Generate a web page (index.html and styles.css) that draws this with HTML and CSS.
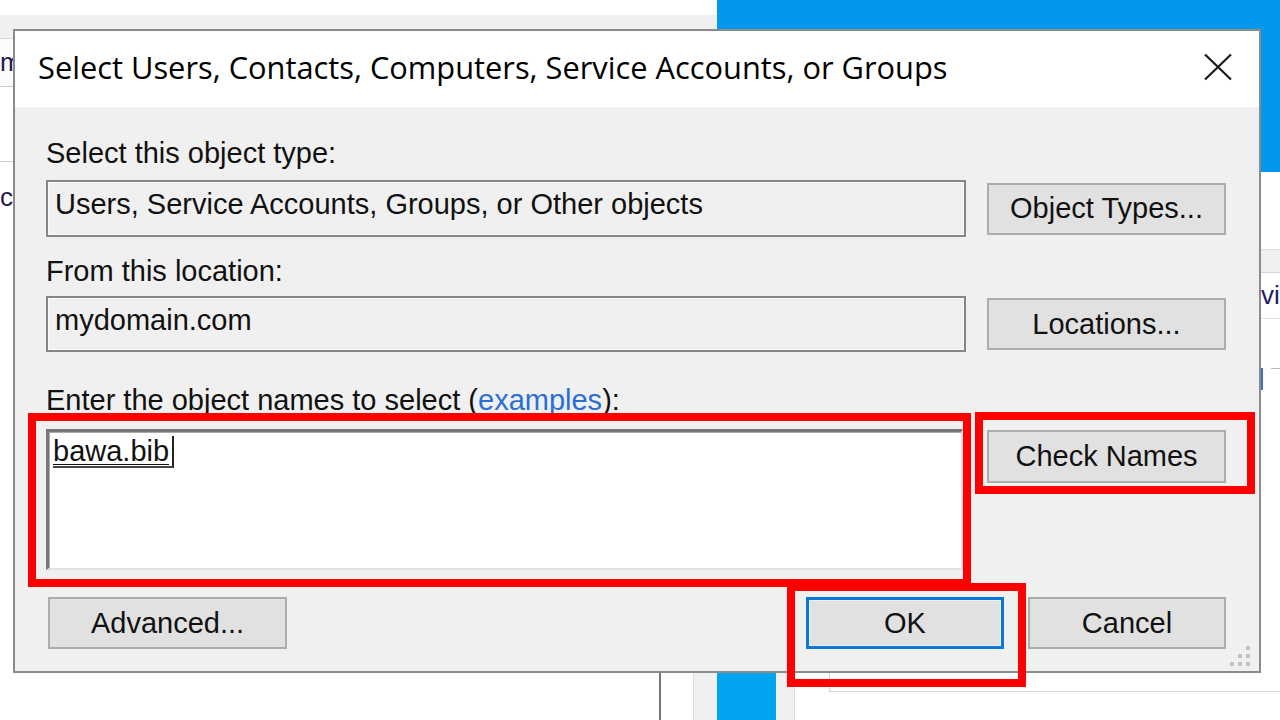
FILE: index.html
```html
<!DOCTYPE html>
<html lang="en">
<head>
<meta charset="utf-8">
<title>Select Users, Contacts, Computers, Service Accounts, or Groups</title>
<link rel="stylesheet" href="styles.css">
</head>
<body>
<div class="desktop">
  <div class="bg-left">
    <div class="bg-left-head"></div>
    <div class="bg-left-row bg-left-row1"><span class="bg-cut">m</span></div>
    <div class="bg-left-row bg-left-row2"></div>
    <div class="bg-left-row3"><span class="bg-cut2">c</span></div>
  </div>
  <div class="bg-blue"></div>
  <div class="bg-right">
    <div class="bg-right-head"></div>
    <div class="bg-right-row">vi</div>
    <div class="bg-right-tick"><span class="tick-blue"></span><span class="tick-line"></span></div>
  </div>
  <div class="bg-vline"></div>
  <div class="bg-strip"><div class="bg-strip-blue"></div></div>
  <div class="bg-frame"></div>

  <div class="dialog">
    <div class="titlebar">
      <span class="title">Select Users, Contacts, Computers, Service Accounts, or Groups</span>
      <svg class="close" width="30" height="28" viewBox="0 0 30 28"><path d="M2 1.5 L28 26.5 M28 1.5 L2 26.5" stroke="#1a1a1a" stroke-width="2.2" fill="none"/></svg>
    </div>
    <div class="content">
      <div class="label">Select this object type:</div>
      <div class="row row-field">
        <div class="field">Users, Service Accounts, Groups, or Other objects</div>
        <div class="btn">Object Types...</div>
      </div>
      <div class="label label-2">From this location:</div>
      <div class="row row-field row-field-2">
        <div class="field field-2">mydomain.com</div>
        <div class="btn">Locations...</div>
      </div>
      <div class="label label-3"><u>E</u>nter the object names to select (<a class="link" href="#">examples</a>):</div>
      <div class="row row-names">
        <div class="names"><span class="name">bawa.bib</span></div>
        <div class="btn btn-check">Check Names</div>
      </div>
      <div class="row row-bottom">
        <div class="btn btn-adv">Advanced...</div>
        <div class="btn btn-ok">OK</div>
        <div class="btn btn-cancel">Cancel</div>
      </div>
    </div>
    <svg class="grip" width="20" height="20" viewBox="0 0 20 20">
      <rect x="16" y="0" width="4" height="4" fill="#c2c2c2"/>
      <rect x="8" y="8" width="4" height="4" fill="#c2c2c2"/>
      <rect x="16" y="8" width="4" height="4" fill="#c2c2c2"/>
      <rect x="0" y="16" width="4" height="4" fill="#c2c2c2"/>
      <rect x="8" y="16" width="4" height="4" fill="#c2c2c2"/>
      <rect x="16" y="16" width="4" height="4" fill="#c2c2c2"/>
    </svg>
  </div>

  <div class="mark mark-names"></div>
  <div class="mark mark-check"></div>
  <div class="mark mark-ok"></div>
</div>
</body>
</html>
```

FILE: styles.css
```css
html, body {
  margin: 0;
  padding: 0;
}
body {
  background: #fff;
  font-family: "Liberation Sans", Arial, sans-serif;
  overflow: hidden;
}
.desktop {
  position: relative;
  width: 1280px;
  height: 720px;
  overflow: hidden;
  background: #fff;
}

/* background windows */
.bg-left {
  position: absolute;
  left: 0;
  top: 15px;
  width: 717px;
  height: 705px;
  background: #fff;
}
.bg-left-head {
  height: 23px;
  background: #f0f0f0;
  border-bottom: 1px solid #d8d8d8;
}
.bg-left-row {
  border-bottom: 1px solid #cdcdcd;
  font-size: 26px;
  color: #1c1c50;
  overflow: hidden;
  white-space: nowrap;
}
.bg-left-row1 {
  height: 47px;
  line-height: 47px;
  background: #fbfbfb;
}
.bg-left-row2 {
  height: 74px;
}
.bg-left-row3 {
  height: 60px;
  padding-top: 20px;
  font-size: 26px;
  color: #1c1c50;
  overflow: hidden;
}
.bg-cut {
  display: inline-block;
  margin-left: 0;
}
.bg-cut2 {
  display: inline-block;
  margin-left: 0;
}
.bg-blue {
  position: absolute;
  left: 717px;
  top: 0;
  width: 563px;
  height: 172px;
  background: #0398ee;
}
.bg-right {
  position: absolute;
  left: 1240px;
  top: 249px;
  width: 40px;
  height: 200px;
}
.bg-right-head {
  height: 22px;
  background: #f0f0f0;
  border-top: 1px solid #e2e2e2;
  border-bottom: 1px solid #d6d6d6;
}
.bg-right-row {
  height: 45px;
  line-height: 45px;
  padding-left: 21px;
  font-size: 26px;
  color: #1d1d6a;
  border-bottom: 1px solid #e3e3e3;
  white-space: nowrap;
}
.bg-right-tick {
  display: flex;
  align-items: flex-start;
  margin-top: 49px;
  padding-left: 21px;
}
.tick-blue {
  width: 2px;
  height: 22px;
  background: #3a6fc4;
}
.tick-line {
  width: 12px;
  height: 1px;
  margin-left: 8px;
  background: #bdbdbd;
}
.bg-vline {
  position: absolute;
  left: 659px;
  top: 673px;
  width: 2px;
  height: 47px;
  background: #767676;
}
.bg-strip {
  position: absolute;
  left: 693px;
  top: 673px;
  width: 100px;
  height: 47px;
  background: #f0f0f0;
  border-left: 1px solid #dcdcdc;
  border-right: 1px solid #dcdcdc;
}
.bg-strip-blue {
  margin-left: 23px;
  width: 59px;
  height: 100%;
  background: #00a4ef;
}
.bg-frame {
  position: absolute;
  left: 829px;
  top: 673px;
  width: 451px;
  height: 18px;
  border-left: 1px solid #d4d4d4;
  border-bottom: 1px solid #d4d4d4;
}

/* dialog */
.dialog {
  position: absolute;
  left: 13px;
  top: 29px;
  width: 1248px;
  height: 644px;
  box-sizing: border-box;
  border: 2px solid #8b8b8b;
  background: #f0f0f0;
  display: flex;
  flex-direction: column;
}
.titlebar {
  height: 76px;
  flex: 0 0 76px;
  background: #fff;
  display: flex;
  align-items: center;
  justify-content: space-between;
  padding: 0 26px 0 23px;
}
.title {
  font-family: "Open Sans", "Noto Sans", sans-serif;
  font-size: 30.8px;
  line-height: 1;
  margin-bottom: 3px;
  color: #000;
  white-space: nowrap;
}
.close {
  display: block;
  margin-top: -4px;
}
.content {
  padding: 30px 33px 0 31px;
  display: flex;
  flex-direction: column;
}
.label {
  height: 32px;
  line-height: 32px;
  font-size: 29px;
  color: #111;
  white-space: nowrap;
}
.label-2 {
  margin-top: 18px;
}
.label-3 {
  margin-top: 32px;
}
.label u {
  text-decoration-thickness: 2px;
  text-underline-offset: 3px;
}
.link {
  color: #2a6fd6;
  text-decoration: underline;
  text-decoration-thickness: 1px;
  text-underline-offset: 3px;
}
.row {
  display: flex;
  gap: 21px;
  align-items: center;
}
.row-field {
  margin-top: 11px;
}
.row-field-2 {
  margin-top: 9px;
}
.field {
  flex: 0 0 920px;
  height: 57px;
  box-sizing: border-box;
  border: 2px solid #868686;
  box-shadow: inset 0 0 0 1px #fbfbfb;
  background: #f0f0f0;
  padding: 6px 7px;
  font-size: 29px;
  line-height: 32px;
  color: #111;
  white-space: nowrap;
}
.field-2 {
  height: 56px;
}
.btn {
  width: 239px;
  height: 52px;
  box-sizing: border-box;
  border: 2px solid #adadad;
  background: #e1e1e1;
  display: flex;
  align-items: center;
  justify-content: center;
  font-size: 29px;
  color: #111;
  white-space: nowrap;
}
.row-names {
  margin-top: 13px;
  align-items: flex-start;
}
.names {
  flex: 0 0 917px;
  height: 141px;
  box-sizing: border-box;
  background: #fff;
  border-top: 3px solid #777;
  border-left: 3px solid #777;
  border-right: 2px solid #e2e2e2;
  border-bottom: 2px solid #e2e2e2;
  box-shadow: inset 1px 1px 0 #a9a9a9;
  padding: 3px 4px;
  font-size: 29px;
  line-height: 32px;
  color: #111;
}
.name {
  display: inline-block;
  text-decoration: underline;
  text-decoration-thickness: 1px;
  text-underline-offset: 3px;
  border-right: 2px solid #222;
  border-bottom: 2px solid #444;
  padding-right: 3px;
  line-height: 30px;
}
.btn-check {
  margin-left: 3px;
  margin-top: 1px;
  height: 53px;
}
.row-bottom {
  margin-top: 27px;
  gap: 24px;
}
.btn-adv {
  margin-left: 2px;
}
.btn-ok {
  margin-left: auto;
  width: 198px;
  border: 3px solid #0a78d7;
  box-shadow: inset 0 0 0 1px #eaf2fb;
}
.btn-cancel {
  width: 198px;
}
.grip {
  position: absolute;
  right: 9px;
  bottom: 5px;
}

/* annotation marks */
.mark {
  position: absolute;
  box-sizing: border-box;
  border: 8px solid #ff0000;
}
.mark-names {
  left: 28px;
  top: 413px;
  width: 943px;
  height: 174px;
}
.mark-check {
  left: 975px;
  top: 412px;
  width: 280px;
  height: 82px;
}
.mark-ok {
  left: 787px;
  top: 583px;
  width: 239px;
  height: 104px;
}
```
